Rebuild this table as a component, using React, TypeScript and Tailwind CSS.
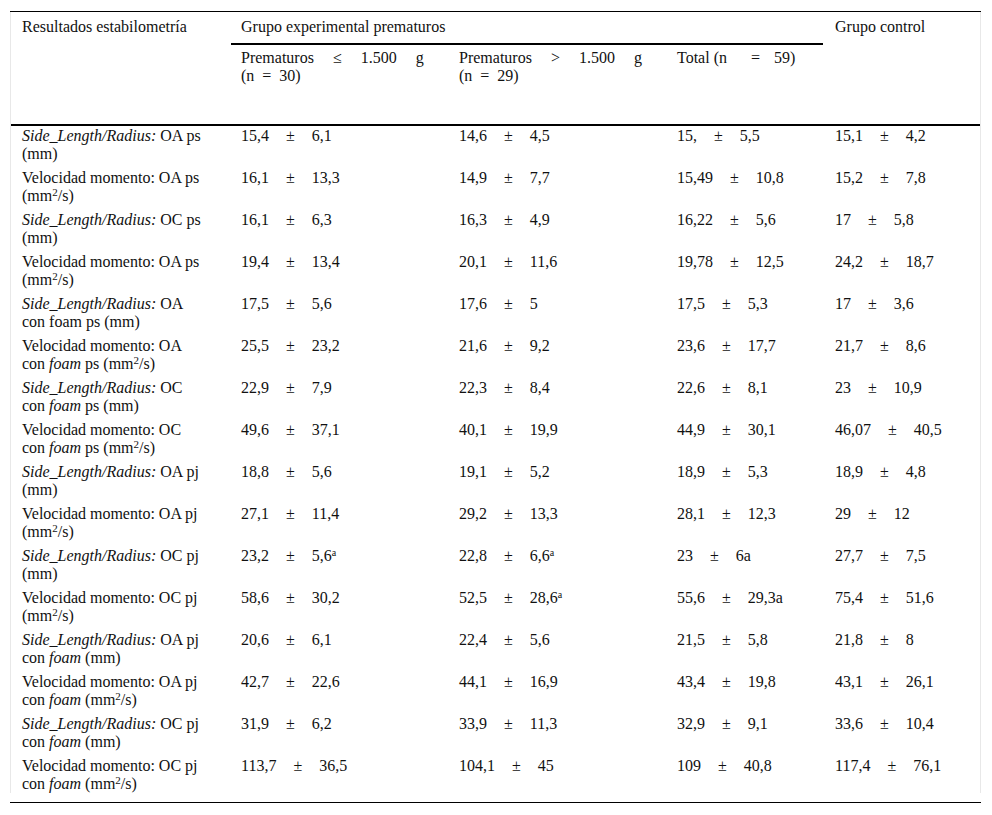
import React from 'react';

type Val = { a: string; b: React.ReactNode };

type Row = {
  label: React.ReactNode;
  vals: Val[];
};

const sup = (t: string, cls = 'text-[11px]') => <sup className={cls}>{t}</sup>;

const mm = '(mm)';
const mm2 = (
  <>
    (mm{sup('2')}/s)
  </>
);

const side = <i>Side_Length/Radius:</i>;
const foam = <i>foam</i>;
const noteA = sup('a', 'text-[10px]');

const rows: Row[] = [
  {
    label: <>{side} OA ps {mm}</>,
    vals: [{ a: '15,4', b: '6,1' }, { a: '14,6', b: '4,5' }, { a: '15,', b: '5,5' }, { a: '15,1', b: '4,2' }],
  },
  {
    label: <>Velocidad momento: OA ps {mm2}</>,
    vals: [{ a: '16,1', b: '13,3' }, { a: '14,9', b: '7,7' }, { a: '15,49', b: '10,8' }, { a: '15,2', b: '7,8' }],
  },
  {
    label: <>{side} OC ps {mm}</>,
    vals: [{ a: '16,1', b: '6,3' }, { a: '16,3', b: '4,9' }, { a: '16,22', b: '5,6' }, { a: '17', b: '5,8' }],
  },
  {
    label: <>Velocidad momento: OA ps {mm2}</>,
    vals: [{ a: '19,4', b: '13,4' }, { a: '20,1', b: '11,6' }, { a: '19,78', b: '12,5' }, { a: '24,2', b: '18,7' }],
  },
  {
    label: <>{side} OA con foam ps {mm}</>,
    vals: [{ a: '17,5', b: '5,6' }, { a: '17,6', b: '5' }, { a: '17,5', b: '5,3' }, { a: '17', b: '3,6' }],
  },
  {
    label: <>Velocidad momento: OA con {foam} ps {mm2}</>,
    vals: [{ a: '25,5', b: '23,2' }, { a: '21,6', b: '9,2' }, { a: '23,6', b: '17,7' }, { a: '21,7', b: '8,6' }],
  },
  {
    label: <>{side} OC con {foam} ps {mm}</>,
    vals: [{ a: '22,9', b: '7,9' }, { a: '22,3', b: '8,4' }, { a: '22,6', b: '8,1' }, { a: '23', b: '10,9' }],
  },
  {
    label: <>Velocidad momento: OC con {foam} ps {mm2}</>,
    vals: [{ a: '49,6', b: '37,1' }, { a: '40,1', b: '19,9' }, { a: '44,9', b: '30,1' }, { a: '46,07', b: '40,5' }],
  },
  {
    label: <>{side} OA pj {mm}</>,
    vals: [{ a: '18,8', b: '5,6' }, { a: '19,1', b: '5,2' }, { a: '18,9', b: '5,3' }, { a: '18,9', b: '4,8' }],
  },
  {
    label: <>Velocidad momento: OA pj {mm2}</>,
    vals: [{ a: '27,1', b: '11,4' }, { a: '29,2', b: '13,3' }, { a: '28,1', b: '12,3' }, { a: '29', b: '12' }],
  },
  {
    label: <>{side} OC pj {mm}</>,
    vals: [
      { a: '23,2', b: <>5,6{noteA}</> },
      { a: '22,8', b: <>6,6{noteA}</> },
      { a: '23', b: '6a' },
      { a: '27,7', b: '7,5' },
    ],
  },
  {
    label: <>Velocidad momento: OC pj {mm2}</>,
    vals: [
      { a: '58,6', b: '30,2' },
      { a: '52,5', b: <>28,6{noteA}</> },
      { a: '55,6', b: '29,3a' },
      { a: '75,4', b: '51,6' },
    ],
  },
  {
    label: <>{side} OA pj con {foam} {mm}</>,
    vals: [{ a: '20,6', b: '6,1' }, { a: '22,4', b: '5,6' }, { a: '21,5', b: '5,8' }, { a: '21,8', b: '8' }],
  },
  {
    label: <>Velocidad momento: OA pj con {foam} {mm2}</>,
    vals: [{ a: '42,7', b: '22,6' }, { a: '44,1', b: '16,9' }, { a: '43,4', b: '19,8' }, { a: '43,1', b: '26,1' }],
  },
  {
    label: <>{side} OC pj con {foam} {mm}</>,
    vals: [{ a: '31,9', b: '6,2' }, { a: '33,9', b: '11,3' }, { a: '32,9', b: '9,1' }, { a: '33,6', b: '10,4' }],
  },
  {
    label: <>Velocidad momento: OC pj con {foam} {mm2}</>,
    vals: [{ a: '113,7', b: '36,5' }, { a: '104,1', b: '45' }, { a: '109', b: '40,8' }, { a: '117,4', b: '76,1' }],
  },
];

const cols = 'grid grid-cols-[220px_218px_218px_158px_155px]';

export default function App() {
  return (
    <div className="w-[992px] h-[815px] bg-white px-[10px] pt-[11px] font-['Liberation_Serif','Times_New_Roman',serif] text-[16px] leading-[18px] text-[#111]">
      <div className="w-[971px] border-t border-black">
        <div className="border-x border-[#e8e8e8]">
          {/* Header */}
          <div className={`${cols} border-b-2 border-black`}>
            <div className="row-span-2 pl-[11px] pt-[6px]">Resultados estabilometría</div>
            <div className="col-span-3 mr-[2px] h-[33px] border-b-2 border-black pl-[10px] pt-[6px]">
              Grupo experimental prematuros
            </div>
            <div className="row-span-2 pl-[10px] pt-[6px]">Grupo control</div>
            <div className="h-[79px] pl-[10px] pt-[4px]">
              <div className="[word-spacing:15px]">Prematuros ≤ 1.500 g</div>
              <div className="[word-spacing:4px]">(n = 30)</div>
            </div>
            <div className="h-[79px] pl-[10px] pt-[4px]">
              <div className="[word-spacing:15px]">Prematuros &gt; 1.500 g</div>
              <div className="[word-spacing:4px]">(n = 29)</div>
            </div>
            <div className="h-[79px] pl-[10px] pt-[4px]">
              <span>Total (n</span>
              <span className="ml-[24px]">=</span>
              <span className="ml-[14px]">59)</span>
            </div>
          </div>

          {/* Body */}
          {rows.map((r, i) => (
            <div
              key={i}
              className={`${cols} ${i === rows.length - 1 ? 'h-[37px]' : 'h-[42px]'} pt-[1px]`}
            >
              <div className="pl-[11px] pr-[25px]">{r.label}</div>
              {r.vals.map((v, j) => (
                <div key={j} className="pl-[10px] whitespace-nowrap [word-spacing:13px]">
                  {v.a} ± {v.b}
                </div>
              ))}
            </div>
          ))}
        </div>
        <div className="h-[9px]" />
        <div className="border-t border-black" />
      </div>
    </div>
  );
}
